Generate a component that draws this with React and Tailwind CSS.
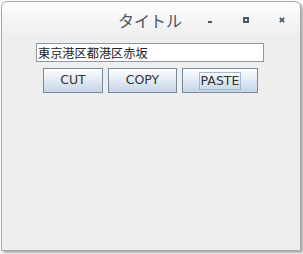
import React from 'react';

const btn =
  "h-[25px] flex items-center justify-center border border-[#7a8a99] bg-gradient-to-b from-[#ffffff] to-[#c4d5e7] text-[12.5px] text-[#333333] font-['DejaVu_Sans',sans-serif]";

const App = () => {
  return (
    <div className="w-[303px] h-[254px] bg-white pl-[1px] pt-[1px]">
      <div className="w-[300px] h-[250px] border border-[#a6a6a6] rounded-t-[6px] bg-[#eeeeee] shadow-[2px_2px_3px_rgba(0,0,0,0.35)] flex flex-col">
        {/* title bar */}
        <div className="h-[36px] rounded-t-[6px] bg-gradient-to-b from-[#fdfdfd] to-[#eeeeee] flex items-center">
          <span className="ml-[116px] w-[66px] text-[16px] leading-[16px] text-[#4a5663] font-['Noto_Sans_CJK_JP',sans-serif]">
            タイトル
          </span>
          <span className="ml-[24px] mt-[4px] w-[4px] h-[2px] bg-[#4a5866]" />
          <span className="ml-[31px] w-[6px] h-[6px] border-2 border-[#4a5866]" />
          <svg className="ml-[30px]" width="6" height="6" viewBox="0 0 6 6">
            <path d="M0.8 0.8 L5.2 5.2 M5.2 0.8 L0.8 5.2" stroke="#4a5866" strokeWidth="1.8" />
          </svg>
        </div>

        {/* text field */}
        <div className="mt-[5px] ml-[34px] w-[228px] h-[19px] bg-white border border-[#8d9aa6] flex items-center pl-[1px]">
          <span className="text-[12.2px] leading-[14px] text-[#222222] font-['Noto_Sans_CJK_JP',sans-serif]">
            東京港区都港区赤坂
          </span>
        </div>

        {/* buttons */}
        <div className="mt-[6px] ml-[41px] flex gap-[5px]">
          <button className={`${btn} w-[60px]`}>CUT</button>
          <button className={`${btn} w-[69px]`}>COPY</button>
          <button className={`${btn} w-[76px]`}>
            <span className="border border-[#a3b8cc] px-[1px] h-[18px] leading-[16px]">PASTE</span>
          </button>
        </div>
      </div>
    </div>
  );
};

export default App;
